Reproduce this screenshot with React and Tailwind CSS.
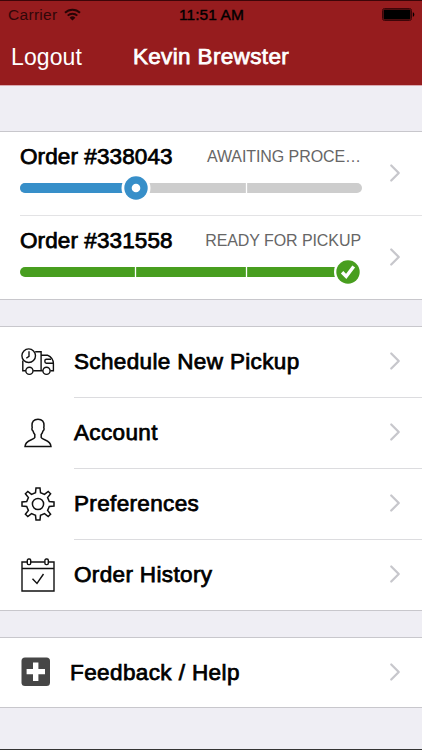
import { ChevronRight } from "lucide-react";
import clsx from "clsx";

const StatusBar = () => (
  <div className="grid h-[29px] grid-cols-3 items-center border-t border-[#3d0508] pl-2 pr-[7px] text-black">
    <div className="flex items-center gap-[7px]">
      <span className="text-[15.5px] leading-none tracking-[0.3px] text-[#300709]">Carrier</span>
      <svg className="mt-[-2px]" width="17" height="13" viewBox="0 0 17 13" fill="none" stroke="#260405" strokeWidth="2">
        <path d="M1 4.7C5.2.6 11.8.6 16 4.7" />
        <path d="M3.7 7.6c2.7-2.6 6.9-2.6 9.6 0" />
        <path d="M8.5 12.5 5.6 9.7a4.1 4.1 0 0 1 5.8 0z" fill="#260405" stroke="none" />
      </svg>
    </div>
    <span className="whitespace-nowrap text-center text-[15.5px] leading-none tracking-[0.1px] [-webkit-text-stroke:0.4px]">
      11:51 AM
    </span>
    <svg className="mt-[-2px] justify-self-end" width="33" height="13" viewBox="0 0 33 13">
      <rect x="0.5" y="0.5" width="29" height="12" rx="2" fill="none" stroke="#3d0508" />
      <rect x="1.5" y="1.5" width="27" height="10" rx="1" />
      <path d="M30.8 4.2c2 .7 2 3.9 0 4.6z" />
    </svg>
  </div>
);

const Header = () => (
  <header className="h-[86px] border-b border-[#d9a9b0] bg-[#961c1e]">
    <StatusBar />
    <div className="grid h-[56px] grid-cols-[1fr_auto_1fr] items-center pl-[11px] pr-[11px] text-white">
      <span className="text-[23px] leading-none tracking-[0.1px]">Logout</span>
      <h1 className="text-[22.5px] leading-none tracking-[0.35px] [-webkit-text-stroke:0.75px]">
        Kevin Brewster
      </h1>
    </div>
  </header>
);

const Chevron = () => (
  <ChevronRight className="-mr-2 mt-[-2px] size-[30px] shrink-0 text-[#c7c7cc]" strokeWidth={1.8} />
);

const orders = [
  { id: "338043", status: "AWAITING PROCE…", done: false },
  { id: "331558", status: "READY FOR PICKUP", done: true },
];

const Progress = ({ done }) => (
  <svg className="block" width="342" height="26" viewBox="0 0 342 26">
    <rect y="8" width="342" height="10" rx="5" fill={done ? "#fff" : "#cdcdcd"} />
    <path
      d={done ? "M5 8H330V18H5A5 5 0 0 1 5 8Z" : "M5 8H116V18H5A5 5 0 0 1 5 8Z"}
      fill={done ? "#489e1f" : "#378fc9"}
    />
    <path d="M226.5 8v10" stroke="#fff" strokeWidth="1.3" />
    {done ? (
      <>
        <path d="M115.5 8v10" stroke="#fff" strokeWidth="1.3" />
        <circle cx="328" cy="13" r="14" fill="#fff" />
        <circle cx="328" cy="13" r="11.7" fill="#489e1f" />
        <path d="m322.1 13.2 4.1 4.2 7.5-10" fill="none" stroke="#fff" strokeWidth="3.4" />
      </>
    ) : (
      <>
        <circle cx="116" cy="13" r="14.5" fill="#fff" />
        <circle cx="116" cy="13" r="11.7" fill="#378fc9" />
        <circle cx="116" cy="13" r="4.3" fill="#fff" />
      </>
    )}
  </svg>
);

const OrderRow = ({ order, last }) => (
  <div
    className={clsx(
      "ml-5 flex items-center justify-between pr-5",
      last ? "h-[83px]" : "h-[84px] border-b border-[#e3e3e5]"
    )}
  >
    <div className="w-[342px] pb-0.5">
      <div className="mb-[5px] flex h-[26px] items-center justify-between">
        <span className="text-[22.5px] leading-none tracking-[0.1px] [-webkit-text-stroke:0.75px]">
          Order #{order.id}
        </span>
        <span
          className={clsx(
            "mr-px text-[16px] leading-none text-[#666]",
            order.done ? "tracking-[-0.08px]" : "tracking-[-0.08px]"
          )}
        >
          {order.status}
        </span>
      </div>
      <Progress done={order.done} />
    </div>
    <Chevron />
  </div>
);

const TruckIcon = () => (
  <svg className="mb-px" width="34" height="28" viewBox="0 0 34 28" fill="none" stroke="#111" strokeWidth="1.4">
    <circle cx="7.7" cy="7.7" r="6.8" />
    <path d="M8 3.3v5l-2.7 2" />
    <path d="M1.8 12.5v10.2h3M12.2 22.7h9.6M14.2 3.8h5.9v18.5M20.1 7.2h6.3c3.8 1.6 6 4.7 6 8.6v6.9h-3" />
    <path d="M30 11.2h-4.6c-1 0-1.5.5-1.5 1.4v1.2c0 .9.5 1.4 1.5 1.4h6.8" />
    <circle cx="8.4" cy="22.8" r="3.6" />
    <circle cx="25.5" cy="22.8" r="3.6" />
  </svg>
);

const PersonIcon = () => (
  <svg className="mb-0.5" width="28" height="30" viewBox="0 0 28 30" fill="none" stroke="#111" strokeWidth="1.5">
    <path d="M14 1.2c-4.3 0-6.2 2.7-6 6.5l.2 2.2c-.8 1.1.1 2.8.9 3.2.3 1.5 1 2.5 1.7 3.3v3C9.8 22.2 1 21.8 1 28.6h26c0-6.8-8.8-6.4-9.8-9.2v-3c.7-.8 1.4-1.8 1.7-3.3.8-.4 1.7-2.1.9-3.2l.2-2.2c.2-3.8-1.7-6.5-6-6.5z" />
  </svg>
);

const GearIcon = () => (
  <svg className="mb-0.5" width="34" height="34" viewBox="0 0 34 34" fill="none" stroke="#111" strokeWidth="1.5">
    <path d="M14.5 5.7 15 1h4l.5 4.7 4 1.7 3.7-3 2.4 2.4-3 3.7 1.7 4L33 15v4l-4.7.5-1.7 4 3 3.7-2.4 2.4-3.7-3-4 1.7L19 33h-4l-.5-4.7-4-1.7-3.7 3-2.4-2.4 3-3.7-1.7-4L1 19v-4l4.7-.5 1.7-4-3-3.7 2.4-2.4 3.7 3z" />
    <circle cx="17" cy="17" r="5.6" />
  </svg>
);

const CalendarIcon = () => (
  <svg width="34" height="34" viewBox="0 0 34 34" fill="none" stroke="#111" strokeWidth="1.4">
    <path d="M6.3 4H1v29h32V4h-5.3M9.7 4h14.1M1 10.5h32" />
    <rect x="6.3" y="1" width="3.4" height="5.6" rx="1.3" />
    <rect x="23.9" y="1" width="3.4" height="5.6" rx="1.3" />
    <path d="m11.5 20.7 4.5 4.8 6.5-9.5" />
  </svg>
);

const menu = [
  { label: "Schedule New Pickup", Icon: TruckIcon },
  { label: "Account", Icon: PersonIcon },
  { label: "Preferences", Icon: GearIcon },
  { label: "Order History", Icon: CalendarIcon },
];

const MenuRow = ({ label, Icon, last }) => (
  <div className={clsx("flex items-center pl-[21px]", last ? "h-[70px]" : "h-[71px]")}>
    <div className="flex w-[53px] shrink-0">
      <div className="flex w-[34px] justify-center">
        <Icon />
      </div>
    </div>
    <div className={clsx("flex h-full flex-1 items-center justify-between pr-5", !last && "border-b border-[#dcdcdf]")}>
      <span className="text-[22.5px] leading-none tracking-[0.35px] [-webkit-text-stroke:0.75px]">{label}</span>
      <Chevron />
    </div>
  </div>
);

const App = () => {
  return (
    <div className="flex h-[750px] w-[422px] flex-col overflow-hidden border-b border-[#333] bg-[#efeef4] font-['Liberation_Sans',Arial,sans-serif] text-black">
      <Header />

      <section className="mt-[45px] border-y border-[#c8c7cc] bg-white">
        {orders.map((order, i) => (
          <OrderRow key={order.id} order={order} last={i === orders.length - 1} />
        ))}
      </section>

      <section className="mt-[26px] border-y border-[#c8c7cc] bg-white">
        {menu.map((item, i) => (
          <MenuRow key={item.label} {...item} last={i === menu.length - 1} />
        ))}
      </section>

      {/* Help */}
      <section className="mt-[26px] flex h-[71px] items-center border-y border-[#c8c7cc] bg-white pl-[21px] pr-5">
        <svg className="mt-[-3px] w-[49px] shrink-0" width="49" height="29" viewBox="0 0 49 29">
          <rect x="0.5" y="0.5" width="28.5" height="28.5" rx="3.5" fill="#464646" />
          <path d="M14.7 5.5v18.4M5.6 14.6H24" stroke="#fff" strokeWidth="5.4" />
        </svg>
        <span className="flex-1 pt-0.5 text-[22.5px] leading-none tracking-[0.4px] [-webkit-text-stroke:0.75px]">
          Feedback / Help
        </span>
        <Chevron />
      </section>
    </div>
  );
};

export default App;
